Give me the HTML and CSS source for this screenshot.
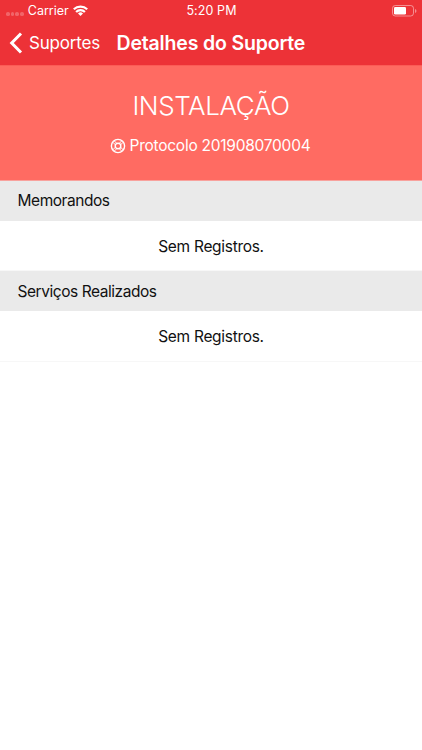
FILE: index.html
```html
<!DOCTYPE html>
<html lang="pt-BR">
<head>
  <meta charset="UTF-8" />
  <meta name="viewport" content="width=device-width, initial-scale=1.0"/>
  <title>Detalhes do Suporte</title>
  <link rel="stylesheet" href="styles.css">
</head>
<body>

  <header>
    <div class="status-bar">
      <div class="carrier">
        <span class="dots"><i></i><i></i><i></i><i></i></span>
        <span>Carrier</span>
        <svg class="wifi" width="15" height="11" viewBox="0 0 15 11" fill="none" stroke="#fff" stroke-width="2.2">
          <path d="M0.8 4.3a9.6 9.6 0 0 1 13.4 0"/>
          <path d="M3.1 6.9a6.2 6.2 0 0 1 8.8 0"/>
          <path d="M7.5 11L5 8.5a3.6 3.6 0 0 1 5 0z" fill="#fff" stroke="none"/>
        </svg>
      </div>
      <span class="time">5:20 PM</span>
      <svg class="battery" width="26" height="12" viewBox="0 0 26 12">
        <rect x="1.5" y="0.5" width="21" height="10.5" rx="2.8" fill="none" stroke="#fff" stroke-opacity="0.45"/>
        <rect x="3" y="2" width="12" height="7.5" rx="1.3" fill="#fff"/>
        <path d="M24 4v4q1.5-.6 1.5-2t-1.5-2z" fill="#fff" fill-opacity="0.45"/>
      </svg>
    </div>
    <div class="nav-bar">
      <a class="back" href="#">
        <svg width="14" height="22" viewBox="0 0 14 22" fill="none" stroke="#fff" stroke-width="3">
          <path d="M12 1.5L2.7 11l9.3 9.5"/>
        </svg>
        <span>Suportes</span>
      </a>
      <h1>Detalhes do Suporte</h1>
    </div>
  </header>

  <section class="summary">
    <h2>INSTALAÇÃO</h2>
    <p>
      <svg width="16" height="16" viewBox="0 0 16 16" fill="none" stroke="#fff" stroke-width="1.4">
        <circle cx="8" cy="8" r="6.6"/>
        <circle cx="8" cy="8" r="2.8"/>
        <path d="M2.9 4.3l2.7 2.7M4.3 2.9L7 5.6M13.1 4.3L10.4 7M11.7 2.9L9 5.6M2.9 11.7L5.6 9M4.3 13.1L7 10.4M13.1 11.7L10.4 9M11.7 13.1L9 10.4" stroke-width="1"/>
      </svg>
      <span>Protocolo 201908070004</span>
    </p>
  </section>

  <main>
    <h3>Memorandos</h3>
    <p class="empty">Sem Registros.</p>
    <h3>Serviços Realizados</h3>
    <p class="empty">Sem Registros.</p>
  </main>

</body>
</html>
```

FILE: styles.css
```css
body {
  margin: 0;
  background-color: #fff;
  color: #111;
  font-family: Inter, 'Liberation Sans', sans-serif;
  font-size: 15.5px;
}

h1, h2, h3, p {
  margin: 0;
  font-weight: 400;
  white-space: nowrap;
}

header {
  box-sizing: border-box;
  height: 66px;
  border-bottom: 1px solid #fb5c56;
  background-color: #ed3237;
  color: #fff;
}

.status-bar {
  display: grid;
  grid-template-columns: 1fr auto 1fr;
  align-items: center;
  height: 21px;
  padding: 0 5px 0 6px;
  font-size: 12.5px;
}

.carrier {
  display: flex;
  align-items: center;
}

.dots {
  display: flex;
  gap: 1px;
  margin: 7px 4px 0 0;
}

.dots i {
  width: 3.7px;
  height: 3.7px;
  border-radius: 50%;
  background-color: rgba(255, 255, 255, 0.25);
}

.wifi {
  margin-left: 4px;
}

.time {
  letter-spacing: 0.1px;
}

.battery {
  justify-self: end;
}

.nav-bar {
  display: flex;
  align-items: center;
  height: 44px;
  padding-left: 9px;
}

.back {
  display: flex;
  align-items: center;
  width: 107.5px;
  color: #fff;
  font-size: 17px;
  letter-spacing: -0.2px;
  text-decoration: none;
}

.back span {
  margin-left: 6px;
}

h1 {
  font-size: 19.5px;
  font-weight: 600;
  letter-spacing: -0.17px;
}

.summary {
  box-sizing: border-box;
  height: 115px;
  padding-top: 23px;
  border-bottom: 1px solid #f8a29d;
  background-color: #ff6b62;
  color: #fff;
  text-align: center;
}

.summary h2 {
  font-size: 26px;
  font-weight: 300;
  letter-spacing: -0.4px;
  line-height: 34px;
}

.summary p {
  display: flex;
  justify-content: center;
  align-items: center;
  gap: 4px;
  margin: 13px 2px 0 0;
  letter-spacing: -0.25px;
  line-height: 20px;
}

h3 {
  height: 40px;
  padding-left: 17.5px;
  background-color: #eaeaea;
  font-size: 15.5px;
  letter-spacing: -0.45px;
  line-height: 40px;
}

.empty {
  box-sizing: border-box;
  height: 50px;
  border-bottom: 1px solid #f7f7f7;
  letter-spacing: -0.3px;
  line-height: 51px;
  text-align: center;
}

.empty + h3 {
  line-height: 41px;
}

.empty:last-child {
  height: 51px;
}
```
